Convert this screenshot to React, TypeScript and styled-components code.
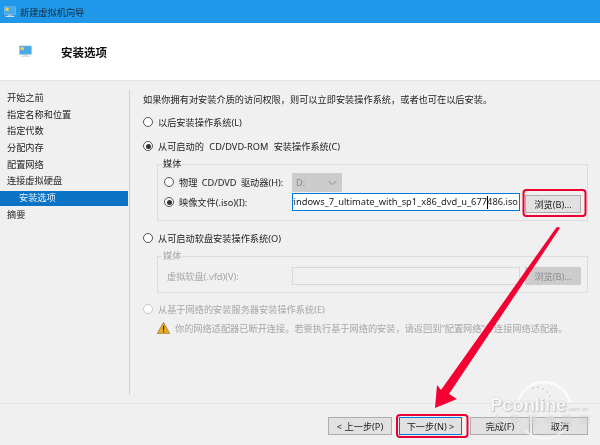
import React from "react";
import styled, { createGlobalStyle } from "styled-components";

const Global = createGlobalStyle`
  html, body { margin: 0; padding: 0; background: #f0f0f0; }
  body { font-family: "Noto Sans", "Noto Sans CJK SC", sans-serif; font-size: 9.2px; color: #111; }
  * { box-sizing: border-box; }
`;

const Win = styled.div`
  position: relative; width: 600px; height: 445px; overflow: hidden;
  display: flex; flex-direction: column; background: #f0f0f0; filter: blur(0.25px);
`;
const TitleBar = styled.div`
  height: 23px; background: #2098ea; display: flex; align-items: center; gap: 4px; padding-left: 4px;
  color: #14293a; font-size: 9.2px;
`;
const Header = styled.div`
  height: 58px; background: #fff; border-bottom: 1px solid #e3e3e3;
  display: flex; align-items: center; padding: 0 0 0 19px; gap: 29px;
`;
const HeaderTitle = styled.div`
  font-size: 11.5px; font-weight: 700; color: #111;
`;
const Body = styled.div`
  flex: 1; display: flex; min-height: 0;
`;
const Sidebar = styled.nav`
  width: 130px; margin: 9px 0 8px; border-right: 1px solid #cfcfcf; padding-right: 1px;
`;
const NavItem = styled.div<{ $active?: boolean; $indent?: boolean }>`
  height: 16.7px; line-height: 14.1px; padding-left: ${p => (p.$indent ? 19 : 7)}px;
  border-top: 1.3px solid transparent; border-bottom: 1.3px solid transparent; background-clip: padding-box;
  background-color: ${p => (p.$active ? "#0a73c6" : "transparent")};
  color: ${p => (p.$active ? "#e8f3fb" : "#1c1c1c")};
`;
const Content = styled.div`
  flex: 1; padding: 12px 12px 0 13px; display: flex; flex-direction: column;
`;
const Desc = styled.div`
  height: 14px; line-height: 14px; white-space: nowrap; color: #1c1c1c;
`;
const RadioRow = styled.div<{ $top: number; $disabled?: boolean; $wide?: boolean }>`
  display: flex; align-items: center; gap: 5px; height: 14px; margin-top: ${p => p.$top}px; white-space: pre;
  word-spacing: ${p => (p.$wide ? 3 : 0)}px;
  color: ${p => (p.$disabled ? "#a6a6a6" : "#1c1c1c")};
`;
const Radio = styled.span<{ $on?: boolean; $disabled?: boolean }>`
  width: 10px; height: 10px; border-radius: 50%; flex: none; background: #fff;
  border: 1px solid ${p => (p.$disabled ? "#c9c9c9" : "#555")};
  display: flex; align-items: center; justify-content: center;
  &::after { content: ""; width: 5px; height: 5px; border-radius: 50%; background: ${p => (p.$on ? "#333" : "transparent")}; }
`;
const Group = styled.fieldset<{ $pad: number }>`
  margin: 4px 0 0 14px; padding: ${p => p.$pad}px 0 0 6px; border: 1px solid #dcdcdc; min-width: 0;
  display: flex; flex-direction: column;
`;
const Legend = styled.legend<{ $disabled?: boolean }>`
  margin-left: -2px; padding: 0 1px; height: 14px; line-height: 14px; font-size: 9.2px;
  color: ${p => (p.$disabled ? "#a6a6a6" : "#1c1c1c")};
`;
const FieldRow = styled.div<{ $h: number }>`
  display: flex; align-items: flex-start; height: ${p => p.$h}px;
  white-space: nowrap;
`;
const FieldLabel = styled.div<{ $disabled?: boolean; $inset?: boolean }>`
  width: 128px; flex: none; display: flex; align-items: center; gap: 5px; height: 18px; word-spacing: 2px;
  padding-left: ${p => (p.$inset ? 3 : 0)}px;
  color: ${p => (p.$disabled ? "#a6a6a6" : "#1c1c1c")};
`;
const Select = styled.div`
  width: 50px; height: 19px; background: #cccccc; color: #8a8a8a; display: flex; align-items: center;
  justify-content: space-between; padding: 0 5px 0 4px;
`;
const IsoInput = styled.div`
  position: relative; width: 228px; height: 18px; background: #fff; border: 1px solid #0078d7;
  display: flex; justify-content: flex-end; align-items: center; overflow: hidden; padding-right: 1px;
  font-size: 9.3px; color: #1c1c1c; line-height: 16px;
`;
const Caret = styled.span`
  position: absolute; left: 194px; top: 2px; width: 1px; height: 13px; background: #000;
`;
const EmptyInput = styled.div`
  width: 228px; height: 18px; background: #f0f0f0; border: 1px solid #d9d9d9;
`;
const Browse = styled.div<{ $disabled?: boolean; $drop?: boolean }>`
  width: 56px; height: 18px; margin: ${p => (p.$drop ? 2 : 0)}px 0 0 5px; display: flex; align-items: center; justify-content: center;
  background: ${p => (p.$disabled ? "#cccccc" : "#e1e1e1")};
  border: 1px solid ${p => (p.$disabled ? "#cccccc" : "#adadad")};
  color: ${p => (p.$disabled ? "#8c8c8c" : "#1c1c1c")};
`;
const WarnRow = styled.div`
  display: flex; align-items: center; gap: 5px; height: 14px; margin: 5px 0 0 14px; white-space: nowrap; color: #a6a6a6;
`;
const Footer = styled.div`
  height: 42px; border-top: 1px solid #e6e6e6; display: flex; justify-content: flex-end;
  padding: 13px 12px 0 0;
`;
const Btn = styled.div<{ $w: number; $left: number; $primary?: boolean }>`
  width: ${p => p.$w}px; height: 18px; margin-left: ${p => p.$left}px; display: flex; align-items: center; justify-content: center;
  background: #e1e1e1; border: ${p => (p.$primary ? "1.5px solid #0078d7" : "1px solid #adadad")}; color: #1c1c1c; font-size: 9.2px;
`;
const Overlay = styled.svg`
  position: absolute; left: 0; top: 0; pointer-events: none;
`;
const Watermark = styled.div`
  position: absolute; left: 490px; top: 393px; color: rgba(255,255,255,.92); white-space: nowrap;
  font-family: "Liberation Sans", sans-serif; font-weight: 700; font-size: 18.5px; line-height: 24px; letter-spacing: -.1px;
  text-shadow: 0 0 1px rgba(150,150,150,.9), 1px 1px 1px rgba(190,190,190,.8);
  small { font-size: 6px; font-weight: 400; letter-spacing: 0; margin-left: 1px; color: #c4c4c4; text-shadow: none; }
`;
const WatermarkCn = styled.div`
  position: absolute; left: 492px; top: 412px; color: rgba(255,255,255,.55); font-size: 10.5px; font-weight: 700;
  letter-spacing: 7px; white-space: nowrap; text-shadow: 0 0 1px rgba(140,140,140,.55);
`;

const MonitorIcon = ({ size }: { size: number }) => (
  <svg width={size} height={size} viewBox="0 0 14 14">
    <rect x="0.5" y="1" width="13" height="9" fill="#4aa9e8" stroke="#8fc8ee" strokeWidth=".6" />
    <circle cx="3.5" cy="3.8" r="2" fill="#f6cf52" />
    <rect x="4.5" y="10.2" width="5" height="1.2" fill="#b9c4cc" />
    <rect x="2" y="11.6" width="10" height="1.2" fill="#d6dde2" />
  </svg>
);

const Chevron = () => (
  <svg width="9" height="6" viewBox="0 0 9 6">
    <path d="M.7 1l3.8 3.8L8.3 1" fill="none" stroke="#8e8e8e" strokeWidth="1" />
  </svg>
);

const Warn = () => (
  <svg width="13" height="12" viewBox="0 0 13 12">
    <path d="M6.5.4L12.8 11.6H.2z" fill="#e8a928" stroke="#8a6a1c" strokeWidth=".6" />
    <rect x="6" y="3.8" width="1.1" height="4.4" fill="#222" />
    <rect x="6" y="9" width="1.1" height="1.2" fill="#222" />
  </svg>
);

const nav = ["开始之前", "指定名称和位置", "指定代数", "分配内存", "配置网络", "连接虚拟硬盘"];

export default function App() {
  return (
    <Win>
      <Global />
      <TitleBar>
        <MonitorIcon size={12} />
        新建虚拟机向导
      </TitleBar>
      <Header>
        <MonitorIcon size={13} />
        <HeaderTitle>安装选项</HeaderTitle>
      </Header>
      <Body>
        <Sidebar>
          {nav.map(n => <NavItem key={n}>{n}</NavItem>)}
          <NavItem $active $indent>安装选项</NavItem>
          <NavItem>摘要</NavItem>
        </Sidebar>
        <Content>
          <Desc>如果你拥有对安装介质的访问权限，则可以立即安装操作系统，或者也可在以后安装。</Desc>
          <RadioRow $top={8}><Radio />以后安装操作系统(L)</RadioRow>
          <RadioRow $top={10} $wide><Radio $on />从可启动的 CD/DVD-ROM 安装操作系统(C)</RadioRow>
          <Group $pad={2}>
            <Legend>媒体</Legend>
            <FieldRow $h={20}>
              <FieldLabel><Radio />物理 CD/DVD 驱动器(H):</FieldLabel>
              <Select>D:<Chevron /></Select>
            </FieldRow>
            <FieldRow $h={27}>
              <FieldLabel><Radio $on />映像文件(.iso)(I):</FieldLabel>
              <IsoInput>
                <span>windows_7_ultimate_with_sp1_x86_dvd_u_677486.iso</span>
                <Caret />
              </IsoInput>
              <Browse $drop>浏览(B)...</Browse>
            </FieldRow>
          </Group>
          <RadioRow $top={10}><Radio />从可启动软盘安装操作系统(O)</RadioRow>
          <Group $pad={4}>
            <Legend $disabled>媒体</Legend>
            <FieldRow $h={25}>
              <FieldLabel $disabled $inset>虚拟软盘(.vfd)(V):</FieldLabel>
              <EmptyInput />
              <Browse $disabled>浏览(B)...</Browse>
            </FieldRow>
          </Group>
          <RadioRow $top={9} $disabled><Radio $disabled />从基于网络的安装服务器安装操作系统(E)</RadioRow>
          <WarnRow><Warn />你的网络适配器已断开连接。若要执行基于网络的安装，请返回到“配置网络”并连接网络适配器。</WarnRow>
        </Content>
      </Body>
      <Footer>
        <Btn $w={64} $left={0}>&lt; 上一步(P)</Btn>
        <Btn $w={63} $left={7} $primary>下一步(N) &gt;</Btn>
        <Btn $w={60} $left={8}>完成(F)</Btn>
        <Btn $w={56} $left={2}>取消</Btn>
      </Footer>
      <Overlay width="600" height="445" viewBox="0 0 600 445">
        <path d="M517 408 A27 27 0 0 1 570 402" fill="none" stroke="rgba(255,255,255,.75)" strokeWidth="2.5" />
        <path d="M525 430 A27 27 0 0 0 566 428" fill="none" stroke="rgba(255,255,255,.55)" strokeWidth="2" />
        <g fill="rgba(205,205,205,.9)">
          <circle cx="533" cy="388" r=".9" /><circle cx="538" cy="387" r=".9" /><circle cx="543" cy="389" r=".9" />
          <circle cx="547" cy="392" r=".9" /><circle cx="550" cy="396" r=".9" />
        </g>
      </Overlay>
      <Watermark>Pconline<small>.com.cn</small></Watermark>
      <WatermarkCn>太平洋电脑网</WatermarkCn>
      <Overlay width="600" height="445" viewBox="0 0 600 445">
        <rect x="523.5" y="190" width="62" height="26" rx="3" fill="none" stroke="#ea0030" strokeWidth="2" />
        <rect x="397" y="415" width="70.5" height="22" rx="3" fill="none" stroke="#ea0030" strokeWidth="2" />
        <path d="M556 228 Q558 226 560 228 L449 394 L457 399 L435 408 L437 385 L441 390 Z" fill="#f50032" />
      </Overlay>
    </Win>
  );
}
